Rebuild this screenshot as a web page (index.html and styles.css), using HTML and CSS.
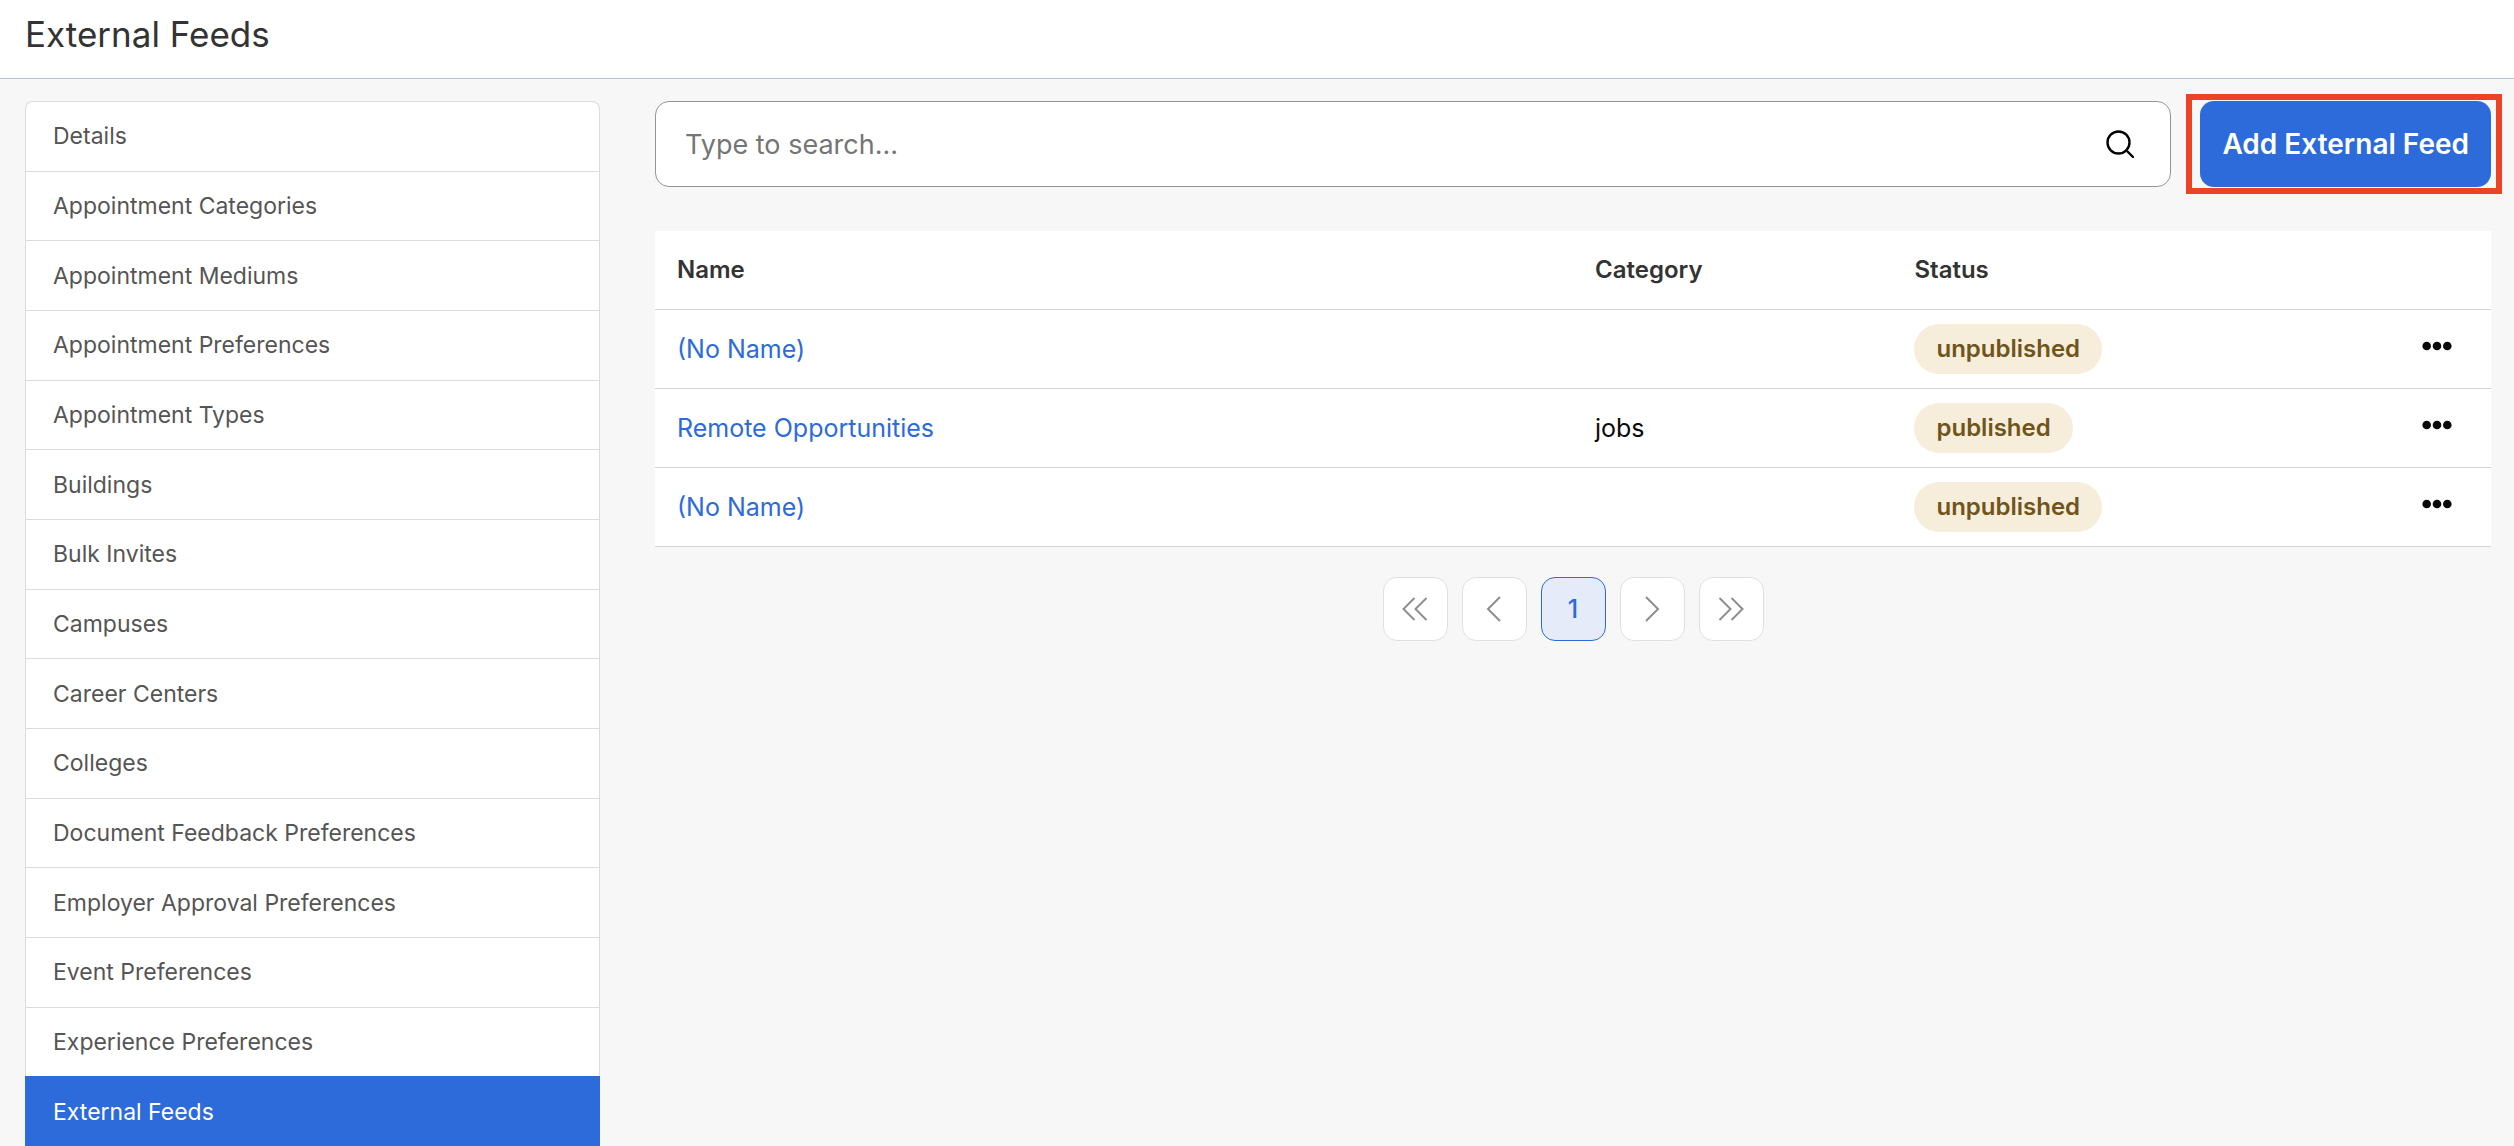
FILE: index.html
```
<!DOCTYPE html>
<html lang="en">
<head>
<meta charset="utf-8">
<meta name="viewport" content="width=device-width, initial-scale=1">
<title>External Feeds</title>
<link rel="stylesheet" href="styles.css">
</head>
<body>
<header class="page-header">
  <h1 class="page-title">External Feeds</h1>
</header>
<div class="layout">
  <nav class="sidebar" aria-label="Settings">
    <a class="sidebar-item" href="#">Details</a>
    <a class="sidebar-item" href="#">Appointment Categories</a>
    <a class="sidebar-item" href="#">Appointment Mediums</a>
    <a class="sidebar-item" href="#">Appointment Preferences</a>
    <a class="sidebar-item" href="#">Appointment Types</a>
    <a class="sidebar-item" href="#">Buildings</a>
    <a class="sidebar-item" href="#">Bulk Invites</a>
    <a class="sidebar-item" href="#">Campuses</a>
    <a class="sidebar-item" href="#">Career Centers</a>
    <a class="sidebar-item" href="#">Colleges</a>
    <a class="sidebar-item" href="#">Document Feedback Preferences</a>
    <a class="sidebar-item" href="#">Employer Approval Preferences</a>
    <a class="sidebar-item" href="#">Event Preferences</a>
    <a class="sidebar-item" href="#">Experience Preferences</a>
    <a class="sidebar-item sidebar-item-active" href="#" aria-current="page">External Feeds</a>
  </nav>
  <main class="content">
    <div class="toolbar">
      <form class="search" role="search">
        <input class="search-input" type="text" placeholder="Type to search..." aria-label="Search external feeds">
        <button class="search-button" type="button" aria-label="Search">
          <svg width="28" height="28" viewBox="0 0 28 28" fill="none" stroke="#000" stroke-width="2.4" stroke-linecap="round"><circle cx="12.5" cy="12.5" r="11"/><path d="M20.5 20.5L27 27"/></svg>
        </button>
      </form>
      <div class="highlight">
        <button class="primary-button" type="button">Add External Feed</button>
      </div>
    </div>
    <table class="feeds">
      <colgroup>
        <col class="col-name">
        <col class="col-category">
        <col class="col-status">
        <col class="col-actions">
      </colgroup>
      <thead>
        <tr><th scope="col">Name</th><th scope="col">Category</th><th scope="col">Status</th><td></td></tr>
      </thead>
      <tbody>
        <tr>
          <td><a href="#">(No Name)</a></td>
          <td></td>
          <td><span class="pill">unpublished</span></td>
          <td class="actions"><button class="more-button" type="button" aria-label="More actions"><svg width="30" height="10" viewBox="0 0 30 10" fill="#0a0a0a"><circle cx="4.7" cy="5" r="4.3"/><circle cx="15" cy="5" r="4.3"/><circle cx="25.3" cy="5" r="4.3"/></svg></button></td>
        </tr>
        <tr>
          <td><a href="#">Remote Opportunities</a></td>
          <td>jobs</td>
          <td><span class="pill">published</span></td>
          <td class="actions"><button class="more-button" type="button" aria-label="More actions"><svg width="30" height="10" viewBox="0 0 30 10" fill="#0a0a0a"><circle cx="4.7" cy="5" r="4.3"/><circle cx="15" cy="5" r="4.3"/><circle cx="25.3" cy="5" r="4.3"/></svg></button></td>
        </tr>
        <tr>
          <td><a href="#">(No Name)</a></td>
          <td></td>
          <td><span class="pill">unpublished</span></td>
          <td class="actions"><button class="more-button" type="button" aria-label="More actions"><svg width="30" height="10" viewBox="0 0 30 10" fill="#0a0a0a"><circle cx="4.7" cy="5" r="4.3"/><circle cx="15" cy="5" r="4.3"/><circle cx="25.3" cy="5" r="4.3"/></svg></button></td>
        </tr>
      </tbody>
    </table>
    <nav class="pagination" aria-label="Pagination">
      <button class="page-button" type="button" aria-label="First page"><svg class="chevron" viewBox="0 0 26 26"><path d="M12.5 2L1.5 13l11 11M24.5 2l-11 11 11 11"/></svg></button>
      <button class="page-button" type="button" aria-label="Previous page"><svg class="chevron" viewBox="0 0 26 26"><path d="M19 1L7 13l12 12"/></svg></button>
      <button class="page-button page-button-current" type="button" aria-current="page">1</button>
      <button class="page-button" type="button" aria-label="Next page"><svg class="chevron" viewBox="0 0 26 26"><path d="M7 1l12 12L7 25"/></svg></button>
      <button class="page-button" type="button" aria-label="Last page"><svg class="chevron" viewBox="0 0 26 26"><path d="M1.5 2l11 11-11 11M13.5 2l11 11-11 11"/></svg></button>
    </nav>
  </main>
</div>
</body>
</html>
```
FILE: styles.css
```
*,
*::before,
*::after {
  box-sizing: border-box;
}

body {
  margin: 0;
  min-height: 100vh;
  display: flex;
  flex-direction: column;
  background: #f7f7f7;
  color: #0a0a0a;
  font-family: Inter, "Liberation Sans", sans-serif;
  font-size: 25px;
  line-height: 30px;
}

button,
input {
  font: inherit;
}

button {
  padding: 0;
  border: 0;
  background: none;
  cursor: pointer;
}

svg {
  display: block;
}

.page-header {
  padding: 12px 25px 22px;
  background: #fff;
  border-bottom: 1px solid #b9c1c8;
}

.page-title {
  margin: 0;
  color: #333;
  font-size: 35px;
  font-weight: 400;
  line-height: 44px;
}

.layout {
  flex: 1;
  display: grid;
  grid-template-columns: 575fr 1836fr;
  gap: 55px;
  padding: 22px 23px 0 25px;
}

/* Sidebar */
.sidebar {
  display: flex;
  flex-direction: column;
}

.sidebar-item {
  flex: 1;
  display: flex;
  align-items: center;
  min-height: 56px;
  padding: 0 27px;
  border: 1px solid #dcdcdc;
  border-bottom: 0;
  background: #fff;
  color: #555;
  font-size: 23px;
  text-decoration: none;
}

.sidebar-item:first-child {
  border-radius: 8px 8px 0 0;
}

.sidebar-item-active {
  border-color: #2c6bd9;
  background: #2c6bd9;
  color: #fff;
}

/* Search and add button */
.toolbar {
  display: flex;
  gap: 29px;
  margin-bottom: 44px;
}

.search {
  flex: 1;
  display: flex;
  align-items: center;
  height: 86px;
  padding: 0 36px 0 29px;
  border: 1px solid #949494;
  border-radius: 14px;
  background: #fff;
}

.search-input {
  flex: 1;
  min-width: 0;
  height: 100%;
  padding: 0;
  border: 0;
  outline: 0;
  background: none;
  font-size: 27px;
}

.search-input::placeholder {
  color: #757575;
  opacity: 1;
}

.highlight {
  position: relative;
  display: flex;
}

.highlight::after {
  content: "";
  position: absolute;
  inset: -7px -11px -7px -14px;
  border: 6px solid #ec4226;
  pointer-events: none;
}

.primary-button {
  padding: 0 22px;
  border-radius: 14px;
  background: #2c6bd9;
  color: #fff;
  font-size: 28px;
  font-weight: 600;
}

/* Feeds table */
.feeds {
  width: 100%;
  table-layout: fixed;
  border-collapse: separate;
  border-spacing: 0;
  background: #fff;
}

.col-name {
  width: 50%;
}

.col-category {
  width: 17.4%;
}

.col-actions {
  width: 10%;
}

.feeds th,
.feeds td {
  height: 79px;
  padding: 0 22px;
  border-bottom: 1px solid #d2d4d9;
  text-align: left;
  vertical-align: middle;
}

.feeds th {
  color: #333;
  font-size: 24px;
  font-weight: 600;
}

.feeds a {
  color: #2c6bd9;
  text-decoration: none;
}

.pill {
  display: inline-block;
  padding: 0 22px;
  border-radius: 25px;
  background: #f6eedb;
  color: #70541a;
  font-size: 24px;
  font-weight: 600;
  line-height: 50px;
  vertical-align: middle;
}

.feeds .actions {
  padding: 0 39px 6px 0;
}

.more-button {
  display: block;
  margin-left: auto;
}

/* Pagination */
.pagination {
  display: flex;
  justify-content: center;
  gap: 14px;
  margin-top: 30px;
}

.page-button {
  display: grid;
  place-items: center;
  width: 65px;
  height: 64px;
  border: 1px solid #e0e0e0;
  border-radius: 14px;
  background: #fff;
}

.page-button-current {
  border-color: #2c6bd9;
  background: #e5ebf8;
  color: #2c6bd9;
  font-weight: 500;
}

.chevron {
  width: 26px;
  height: 26px;
  fill: none;
  stroke: #8e8e8e;
  stroke-width: 2;
}
```
